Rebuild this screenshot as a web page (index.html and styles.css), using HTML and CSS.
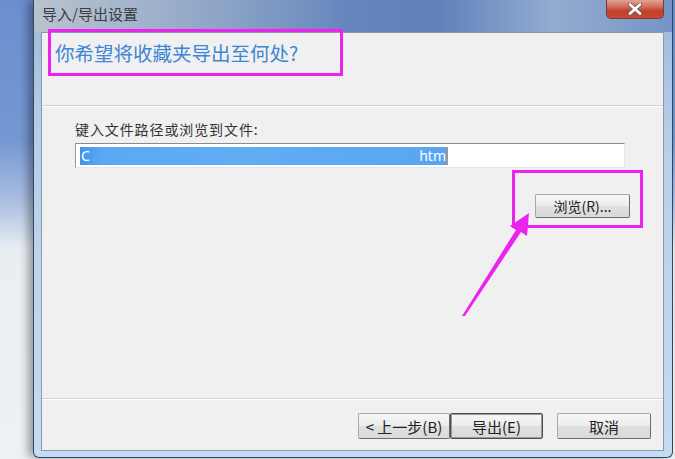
FILE: index.html
```html
<!DOCTYPE html>
<html lang="zh-CN">
<head>
<meta charset="utf-8">
<title>导入/导出设置</title>
<link rel="stylesheet" href="styles.css">
</head>
<body>
<div class="desktop">
  <div class="window">
    <div class="titlebar">
      <span class="title-text">导入/导出设置</span>
      <div class="close-btn">
        <svg width="18" height="12" viewBox="0 0 18 12"><path d="M4 1.5 L14 10.5 M14 1.5 L4 10.5" stroke="#6b5a58" stroke-width="4.2" stroke-linecap="round"/><path d="M4 1.5 L14 10.5 M14 1.5 L4 10.5" stroke="#ffffff" stroke-width="2.6" stroke-linecap="round"/></svg>
      </div>
    </div>
    <div class="client">
      <div class="header">
        <h1 class="instruction">你希望将收藏夹导出至何处?</h1>
      </div>
      <div class="content">
        <div class="label">键入文件路径或浏览到文件:</div>
        <div class="textbox">
          <span class="selection"><span>C</span><span class="blur"></span><span>htm</span></span><span class="caret"></span>
        </div>
        <div class="browse-row">
          <button class="btn browse">浏览(R)...</button>
        </div>
      </div>
      <div class="footer">
        <button class="btn back">&lt; 上一步(B)</button>
        <button class="btn default">导出(E)</button>
        <button class="btn cancel">取消</button>
      </div>
    </div>
  </div>
</div>
<svg class="annotations" width="675" height="459" viewBox="0 0 675 459">
  <rect x="49.5" y="30.5" width="292" height="44" fill="none" stroke="#ee22ee" stroke-width="3"/>
  <rect x="513.5" y="171.5" width="128" height="55" fill="none" stroke="#ee22ee" stroke-width="3"/>
  <polygon points="462,316 516,230 510,226 529,213 527,236 521,232 465,316" fill="#ee22ee"/>
</svg>
</body>
</html>
```

FILE: styles.css
```css
* { box-sizing: border-box; }

html, body {
  margin: 0;
  padding: 0;
}

body {
  width: 675px;
  height: 459px;
  overflow: hidden;
  position: relative;
  font-family: "Noto Sans CJK SC", "Noto Sans", sans-serif;
  background: #2f3a44;
}

.desktop {
  width: 675px;
  height: 459px;
  display: flex;
  background: linear-gradient(to bottom, #6b8ecf 0px, #7597d2 140px, #a9bde0 200px, #e9eef3 250px, #eef1f3 459px);
}

.window {
  margin-left: 33px;
  width: 640px;
  height: 458px;
  border: 1px solid #34465a;
  border-top: none;
  border-radius: 0 0 6px 6px;
  display: flex;
  flex-direction: column;
  background: linear-gradient(to bottom, #9fb8da 0px, #b7cfea 140px, #c3dbf3 459px);
  box-shadow: -5px 0 8px rgba(0, 0, 0, 0.35);
}

.titlebar {
  height: 32px;
  display: flex;
  align-items: flex-start;
  padding-left: 8px;
  background: linear-gradient(to right, #b9c2ce 0px, #a6b6cc 90px, #8aa2c6 200px, #6686bd 310px, #5f80b8 400px, #7d9ac8 470px, #93abcf 520px, #87a2cc 570px, #7594c6 637px);
}

.title-text {
  margin-top: 4px;
  font-size: 15px;
  line-height: 20px;
  color: #3a3d42;
}

.close-btn {
  margin-left: auto;
  margin-right: 8px;
  width: 58px;
  height: 19px;
  border: 1px solid #7d3a32;
  border-top: none;
  border-radius: 0 0 5px 5px;
  background: linear-gradient(to bottom, #e1a294 0px, #d5725f 6px, #c3402c 11px, #c84a33 19px);
  display: flex;
  align-items: center;
  justify-content: center;
}

.client {
  margin: 0 8px 0 7px;
  width: 623px;
  height: 419px;
  border: 1px solid #8b9aab;
  background: #f0f0f0;
  display: flex;
  flex-direction: column;
}

.header {
  height: 73px;
  padding: 7px 0 0 13px;
  border-bottom: 1px solid #d2d2d2;
  box-shadow: 0 1px 0 #ffffff;
}

.instruction {
  margin: 0;
  font-weight: normal;
  font-size: 19.5px;
  line-height: 26px;
  color: #3e86d5;
}

.content {
  flex: 1;
  padding: 15px 0 0 33px;
  display: flex;
  flex-direction: column;
}

.label {
  font-size: 14px;
  line-height: 16px;
  letter-spacing: 0.9px;
  color: #333333;
}

.textbox {
  margin-top: 6px;
  width: 550px;
  height: 25px;
  background: #ffffff;
  border-top: 1px solid #8a8a8a;
  border-left: 1px solid #9a9a9a;
  border-right: 1px solid #e4e4e4;
  border-bottom: 1px solid #e4e4e4;
  padding: 3px 0 0 4px;
  display: flex;
  align-items: flex-start;
}

.selection {
  width: 367px;
  height: 18px;
  display: flex;
  align-items: center;
  justify-content: space-between;
  background: linear-gradient(to right, #3f93ec 0px, #5aa8f4 20px, #62acf3 160px, #59a5f2 367px);
  color: #ffffff;
  font-family: "Noto Sans", sans-serif;
  font-size: 14px;
  line-height: 18px;
  padding: 0 1px 0 1px;
}

.blur {
  flex: 1;
}

.caret {
  width: 1px;
  height: 18px;
  background: #d88a3a;
}

.browse-row {
  margin-top: 26px;
  width: 555px;
  display: flex;
  justify-content: flex-end;
}

.btn {
  font-family: "Noto Sans CJK SC", "Noto Sans", sans-serif;
  color: #222222;
  background: linear-gradient(to bottom, #f7f7f7 0%, #ececec 50%, #e0e0e0 51%, #d9d9d9 100%);
  border: 1px solid #a8a8a8;
  border-right-color: #6d6d6d;
  border-bottom-color: #6d6d6d;
  border-radius: 2px;
  padding: 0;
  margin: 0;
  display: flex;
  align-items: center;
  justify-content: center;
}

.browse {
  width: 95px;
  height: 24px;
  font-size: 14px;
}

.footer {
  height: 52px;
  border-top: 1px solid #d2d2d2;
  box-shadow: inset 0 1px 0 #ffffff;
  display: flex;
  align-items: flex-start;
  justify-content: flex-end;
  padding: 14px 12px 0 0;
}

.footer .btn {
  height: 26px;
  font-size: 15px;
}

.back {
  width: 92px;
}

.default {
  width: 93px;
  border: 1px solid #4e4e4e;
  box-shadow: inset 0 0 0 1px #9a9a9a;
}

.cancel {
  width: 94px;
  margin-left: 14px;
}

.annotations {
  position: absolute;
  top: 0;
  left: 0;
  pointer-events: none;
}
```
